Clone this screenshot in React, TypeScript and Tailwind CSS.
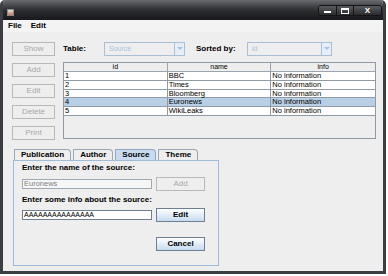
import React from 'react';

const font = { fontFamily: '"Liberation Sans", Arial, sans-serif' };

const rows = [
  { id: '1', name: 'BBC' },
  { id: '2', name: 'Times' },
  { id: '3', name: 'Bloomberg' },
  { id: '4', name: 'Euronews' },
  { id: '5', name: 'WikiLeaks' },
];

function SideButton({ label }: { label: string }) {
  return (
    <div className="h-[14px] w-[43px] border border-[#b8b8b8] bg-[#eeeeee] flex items-center justify-center text-[8px] text-[#a8a8a8]">
      {label}
    </div>
  );
}

function Combo({ value, width }: { value: string; width: string }) {
  return (
    <div className={`h-[14px] ${width} border border-[#a9bfd6] bg-[#eeeeee] flex`}>
      <div className="flex-1 text-[7px] text-[#a9c2e0] pl-[4px] leading-[12px]">{value}</div>
      <div className="w-[10px] border-l border-[#a9bfd6] bg-[#e6eef7] flex items-center justify-center">
        <svg width="6" height="4" viewBox="0 0 6 4">
          <path d="M0 0 L6 0 L3 3 Z" fill="#a9c2e0" />
        </svg>
      </div>
    </div>
  );
}

function Tab({ label, active }: { label: string; active?: boolean }) {
  return (
    <div
      className={`h-[11px] px-[6px] border border-b-0 rounded-tr-[4px] text-[8px] font-bold leading-[10px] text-black ${
        active ? 'bg-[#c8daee] border-[#8ea8c4]' : 'bg-[#eeeeee] border-[#9aa7b4]'
      }`}
    >
      {label}
    </div>
  );
}

function PanelButton({ label, enabled }: { label: string; enabled?: boolean }) {
  return enabled ? (
    <div className="h-[14px] w-[49px] border border-[#6e7f91] bg-gradient-to-b from-[#ffffff] to-[#c6dbf0] flex items-center justify-center text-[8px] font-bold text-black">
      {label}
    </div>
  ) : (
    <div className="h-[14px] w-[49px] border border-[#b8b8b8] bg-[#eeeeee] flex items-center justify-center text-[8px] text-[#a8a8a8]">
      {label}
    </div>
  );
}

export default function App() {
  return (
    <div className="w-[388px] h-[276px] bg-white antialiased" style={font}>
      <div className="w-[386px] h-[274px] border-x-[3px] border-b-[3px] border-[#3a3d42] rounded-t-[5px] flex flex-col bg-[#eeeeee] overflow-hidden">
        {/* title bar */}
        <div className="h-[20px] bg-gradient-to-b from-[#6a6c70] via-[#2c2e31] to-[#17181a] flex items-start justify-between">
          <div className="mt-[9px] ml-[4px] w-[7px] h-[7px] bg-gradient-to-b from-[#e9e4da] to-[#c47b54] border border-[#8a8a8a]" />
          <div className="mt-[5px] mr-[1px] flex h-[11px] border border-[#141414] rounded-[3px] overflow-hidden">
            <div className="w-[18px] bg-gradient-to-b from-[#5a5c60] to-[#2a2c2f] border-r border-[#141414] flex items-end justify-center pb-[2px]">
              <div className="w-[7px] h-[2px] bg-white" />
            </div>
            <div className="w-[17px] bg-gradient-to-b from-[#5a5c60] to-[#2a2c2f] border-r border-[#141414] flex items-center justify-center">
              <div className="w-[8px] h-[6px] border border-white border-t-2" />
            </div>
            <div className="w-[27px] bg-gradient-to-b from-[#5a5c60] to-[#2a2c2f] flex items-center justify-center text-white text-[8px] font-bold leading-none">
              X
            </div>
          </div>
        </div>
        {/* menu bar */}
        <div className="h-[12px] bg-[#f3f3f3] flex items-center gap-[9px] pl-[5px] text-[8px] font-bold text-black">
          <span>File</span>
          <span>Edit</span>
        </div>
        {/* content */}
        <div className="flex gap-[8px] pl-[9px] pt-[10px]">
          <div className="flex flex-col gap-[7px]">
            <SideButton label="Show" />
            <SideButton label="Add" />
            <SideButton label="Edit" />
            <SideButton label="Delete" />
            <SideButton label="Print" />
          </div>
          <div className="flex flex-col">
            <div className="flex items-center h-[14px]">
              <span className="w-[41px] text-[8px] font-bold text-black">Table:</span>
              <Combo value="Source" width="w-[81px]" />
              <span className="ml-[11px] w-[51px] text-[8px] font-bold text-black">Sorted by:</span>
              <Combo value="id" width="w-[85px]" />
            </div>
            <div className="mt-[6px] w-[313px] h-[77px] border border-[#8f9aa5] bg-[#eeeeee]">
              <div className="grid grid-cols-3 h-[9px] bg-[#eeeeee] border-b border-[#9aa5b1] text-[7px] text-black leading-[8px]">
                <div className="text-center border-r border-[#9aa5b1]">id</div>
                <div className="text-center border-r border-[#9aa5b1]">name</div>
                <div className="text-center">info</div>
              </div>
              {rows.map((r) => (
                <div
                  key={r.id}
                  className={`grid grid-cols-3 h-[8.8px] border-b border-[#8f9aa5] text-[7.5px] leading-[8px] text-black ${
                    r.id === '4' ? 'bg-[#b8cfe5]' : 'bg-white'
                  }`}
                >
                  <div className="pl-[1px] border-r border-[#8f9aa5]">{r.id}</div>
                  <div className="pl-[1px] border-r border-[#8f9aa5]">{r.name}</div>
                  <div className="pl-[1px]">No information</div>
                </div>
              ))}
            </div>
          </div>
        </div>
        {/* tabbed pane */}
        <div className="ml-[10px] mt-[9px] flex flex-col w-[206px]">
          <div className="flex gap-[2px] pl-[1px] items-end">
            <Tab label="Publication" />
            <Tab label="Author" />
            <Tab label="Source" active />
            <Tab label="Theme" />
          </div>
          <div className="h-[106px] border border-[#9fbbdc] pl-[8px] pt-[2px] flex flex-col">
            <div className="text-[8px] font-bold text-black leading-[10px]">Enter the name of the source:</div>
            <div className="mt-[4px] flex items-center gap-[4px]">
              <div className="w-[130px] h-[10px] border border-[#a0a8b0] bg-[#f6f6f6] text-[7.5px] text-[#808080] leading-[8px] pl-[1px]">
                Euronews
              </div>
              <PanelButton label="Add" />
            </div>
            <div className="mt-[4px] text-[8px] font-bold text-black leading-[10px]">Enter some info about the source:</div>
            <div className="mt-[3px] flex items-center gap-[4px]">
              <div className="w-[130px] h-[10px] border border-[#6e7f91] bg-white text-[7px] text-black leading-[8px] pl-[1px]">
                AAAAAAAAAAAAAAA
              </div>
              <PanelButton label="Edit" enabled />
            </div>
            <div className="mt-[15px] pl-[134px]">
              <PanelButton label="Cancel" enabled />
            </div>
          </div>
        </div>
      </div>
    </div>
  );
}
